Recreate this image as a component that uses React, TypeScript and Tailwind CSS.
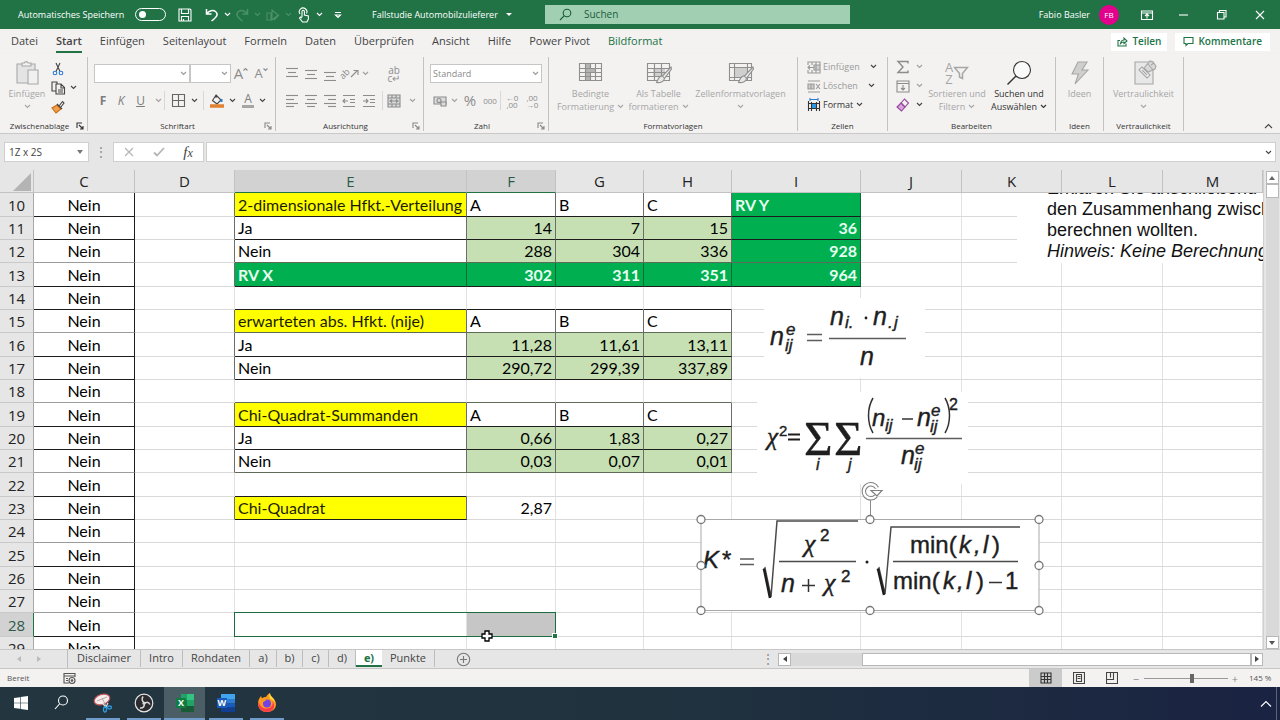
import React from 'react';
import clsx from 'clsx';

type Kind = 'yellow' | 'plain' | 'light' | 'total' | 'open';

interface CellData {
  value: string;
  kind: Kind;
}

const columns = ['C', 'D', 'E', 'F', 'G', 'H', 'I', 'J', 'K', 'L', 'M'];
const rowNumbers = Array.from({ length: 20 }).map((_, index) => index + 10);

const cell = (value: string, kind: Kind): CellData => ({ value, kind });

const tableHead = (title: string) => ({
  E: cell(title, 'yellow'),
  F: cell('A', 'plain'),
  G: cell('B', 'plain'),
  H: cell('C', 'plain'),
});

const tableRow = (title: string, values: string[]) => ({
  E: cell(title, 'plain'),
  F: cell(values[0], 'light'),
  G: cell(values[1], 'light'),
  H: cell(values[2], 'light'),
});

const sheet: Record<number, Record<string, CellData>> = {
  10: { ...tableHead('2-dimensionale Hfkt.-Verteilung'), I: cell('RV Y', 'total') },
  11: { ...tableRow('Ja', ['14', '7', '15']), I: cell('36', 'total') },
  12: { ...tableRow('Nein', ['288', '304', '336']), I: cell('928', 'total') },
  13: { E: cell('RV X', 'total'), F: cell('302', 'total'), G: cell('311', 'total'), H: cell('351', 'total'), I: cell('964', 'total') },
  15: tableHead('erwarteten abs. Hfkt. (nije)'),
  16: tableRow('Ja', ['11,28', '11,61', '13,11']),
  17: tableRow('Nein', ['290,72', '299,39', '337,89']),
  19: tableHead('Chi-Quadrat-Summanden'),
  20: tableRow('Ja', ['0,66', '1,83', '0,27']),
  21: tableRow('Nein', ['0,03', '0,07', '0,01']),
  23: { E: cell('Chi-Quadrat', 'yellow'), F: cell('2,87', 'open') },
};

const kindClasses: Record<Kind, string> = {
  yellow: 'bg-[#ffff00] text-[#1c1c00]',
  plain: 'bg-white',
  light: 'bg-[#c6e0b4]',
  total: 'bg-[#00b050] text-[#e9fff2] font-bold',
  open: '',
};

const isBoxed = (row: number, column: string) => {
  const data = sheet[row]?.[column];
  return data != undefined && data.kind != 'open';
};

function Chevron({ className = 'text-[#444]' }: { className?: string }) {
  return (
    <svg className={clsx('h-[5px] w-[7px] shrink-0', className)} viewBox="0 0 7 5" fill="none" stroke="currentColor" strokeWidth="1.1">
      <path d="M1 1l2.5 2.5L6 1" />
    </svg>
  );
}

function Icon({ size = 16, className, children }: { size?: number; className?: string; children: React.ReactNode }) {
  return (
    <svg width={size} height={size} viewBox={`0 0 ${size} ${size}`} fill="none" stroke="currentColor" strokeWidth="1.1" className={clsx('shrink-0', className)}>
      {children}
    </svg>
  );
}

/* ---------- title bar ---------- */

function TitleBar() {
  return (
    <header className="flex h-[29px] shrink-0 items-center bg-[#217346] text-[10px] text-white">
      <label className="flex w-[171px] shrink-0 items-center gap-[5px] pl-[18px]">
        <span className="w-[112px] text-[9px] whitespace-nowrap">Automatisches Speichern</span>
        <span className="flex h-[13px] w-[31px] items-center rounded-full border border-white pl-[3px]">
          <input type="checkbox" className="h-[7px] w-[7px] appearance-none rounded-full bg-white" />
        </span>
      </label>
      <div className="flex w-[201px] shrink-0 items-center">
        <button aria-label="Speichern" className="flex w-[27px] justify-center">
          <Icon>
            <path d="M2 2h11l1 1v11H2zM4.500 2v4.500h7V2M4.500 14V9.500h7V14M6.500 14v-2" />
          </Icon>
        </button>
        <button aria-label="Rückgängig" className="flex w-[34px] items-center justify-center gap-1 pl-1">
          <Icon>
            <path strokeWidth="1.5" d="M2.500 2v5h5M2.500 7C5 3.500 9 2.500 11.500 4.500c3 2.500 2 5-4 9.500" />
          </Icon>
          <Chevron className="text-white" />
        </button>
        <button aria-label="Wiederholen" className="flex w-[31px] items-center justify-center gap-1 text-[#4a9069]">
          <Icon>
            <path strokeWidth="1.5" d="M13.500 2v5h-5M13.500 7C11 3.500 7 2.500 4.500 4.500c-3 2.500-2 5 4 9.500" />
          </Icon>
          <Chevron className="text-[#4a9069]" />
        </button>
        <button aria-label="Freihand" className="flex w-[30px] items-center justify-center gap-1 text-[#4a9069]">
          <Icon>
            <path d="M2 6v7h4V6zM7 3v10l6-5zM9 13l5-5" />
          </Icon>
          <Chevron className="text-[#4a9069]" />
        </button>
        <button aria-label="Touch-/Mausmodus" className="flex w-[33px] items-center justify-center gap-1">
          <Icon>
            <path d="M6 10V4.500a1.200 1.200 0 0 1 2.400 0V8l4 1v3l-1.500 3H6.500L3.500 11l1-1L6 11M4 7a3.800 3.800 0 1 1 6.500-.5" />
          </Icon>
          <Chevron className="text-white" />
        </button>
        <button aria-label="Symbolleiste anpassen" className="flex w-[16px] justify-end">
          <Icon size={8}>
            <path d="M1 1.500h6M1.500 4l2.500 2.500L6.500 4z" />
          </Icon>
        </button>
      </div>
      <button className="flex w-[173px] shrink-0 items-center gap-2 text-[9px] whitespace-nowrap">
        <span>Fallstudie Automobilzulieferer</span>
        <svg className="h-[4px] w-[6px]" viewBox="0 0 6 4">
          <path d="M0 0h6L3 3z" fill="white" />
        </svg>
      </button>
      <label className="flex h-[19px] w-[305px] shrink-0 items-center bg-[#a0cfb2] pl-[14px] text-[#185c37]">
        <Icon size={13}>
          <circle cx="8" cy="5" r="3.800" />
          <path d="M5.300 7.700L1 12" />
        </Icon>
        <input type="text" placeholder="Suchen" aria-label="Suchen" className="ml-3 w-full bg-transparent text-[10px] outline-none placeholder:text-[#205c3b]" />
      </label>
      <div className="ml-auto flex items-center">
        <span className="text-[9px] whitespace-nowrap">Fabio Basler</span>
        <span className="mr-[21px] ml-[9px] flex size-5 items-center justify-center rounded-full bg-[#e3008c] text-[8px]">FB</span>
        <button aria-label="Menüband-Anzeigeoptionen" className="flex w-[38px] justify-start">
          <Icon size={14}>
            <path d="M1.500 3h11v8.500h-11zM1.500 5h11M7 10.500V6M5 8l2-2 2 2" />
          </Icon>
        </button>
        <button aria-label="Minimieren" className="flex w-[38px] justify-start">
          <Icon size={12}>
            <path d="M1 6h9" />
          </Icon>
        </button>
        <button aria-label="Wiederherstellen" className="flex w-[38px] justify-start">
          <Icon size={12}>
            <path d="M1.500 3.500h6.500v6.500H1.500zM3.500 3.500v-2H10V8H8" />
          </Icon>
        </button>
        <button aria-label="Schließen" className="flex w-[26px] justify-start">
          <Icon size={12}>
            <path d="M2 2l8 8M10 2l-8 8" />
          </Icon>
        </button>
      </div>
    </header>
  );
}

/* ---------- ribbon ---------- */

const ribbonTabs = ['Datei', 'Start', 'Einfügen', 'Seitenlayout', 'Formeln', 'Daten', 'Überprüfen', 'Ansicht', 'Hilfe', 'Power Pivot', 'Bildformat'];

function RibbonTabs() {
  return (
    <nav className="flex h-[25px] shrink-0 items-center bg-[#f3f2f1] pr-[10px] pl-[11px] text-[11px] text-[#444]">
      <div className="flex gap-[18px]">
        {ribbonTabs.map((tab) => (
          <button
            key={tab}
            className={clsx(
              'h-[23px] border-b-2 pt-px whitespace-nowrap',
              tab == 'Start' ? 'border-[#217346] font-semibold' : 'border-transparent',
              tab == 'Bildformat' && 'text-[#217346]',
            )}
          >
            {tab}
          </button>
        ))}
      </div>
      <div className="ml-auto flex gap-2 text-[10px] font-semibold text-[#217346]">
        <button className="flex h-[18px] items-center gap-1 bg-white px-[6px]">
          <Icon size={11}>
            <path d="M3 4.500H1V10h8V7.500M3.500 7.500C4 5 5.500 4 7 4V2l3 3-3 2.500V6C5.500 6 4.500 6.500 3.500 7.500z" />
          </Icon>
          Teilen
        </button>
        <button className="flex h-[18px] items-center gap-1 bg-white px-2">
          <Icon size={11}>
            <path d="M1 1.500h9v6H5L3 9.500v-2H1z" />
          </Icon>
          Kommentare
        </button>
      </div>
    </nav>
  );
}

function Group({ label, className, launcher, children }: { label: string; className: string; launcher?: string; children: React.ReactNode }) {
  return (
    <section aria-label={label} className={clsx('flex h-[74px] shrink-0 flex-col border-r border-[#c4c2c0]', className)}>
      <div className="flex-1">{children}</div>
      <div className="flex h-[11px] items-center px-[3px] text-[8px] text-[#333]">
        <span className="flex-1 text-center leading-[10px] whitespace-nowrap">{label}</span>
        {launcher ? (
          <button aria-label={`${label} Optionen`} className={launcher}>
            <Icon size={8}>
              <path d="M1 6V1h5M3 3l4 4M7 4v3H4" />
            </Icon>
          </button>
        ) : null}
      </div>
    </section>
  );
}

function BigButton({ lines, className, chevron, icon }: { lines: string[]; className: string; chevron?: boolean; icon: React.ReactNode }) {
  return (
    <button className={clsx('flex flex-col items-center pt-px text-[9px] leading-[13px]', className)}>
      <span className="flex h-[29px] items-center">{icon}</span>
      {lines.map((line, index) => (
        <span key={line + index} className="flex h-[13px] items-center gap-[3px] whitespace-nowrap">
          {line}
          {chevron && index == lines.length - 1 ? <Chevron className="text-current" /> : null}
        </span>
      ))}
    </button>
  );
}

function ConditionalIcon() {
  return (
    <Icon size={27} className="text-[#8f8f8f]">
      <path d="M8 4h5v18H8zM13 9h5v5h-5z" fill="#b4b4b4" stroke="none" />
      <path d="M2.500 4.500h22v17h-22zM2.500 9.500h22M2.500 13.500h22M2.500 17.500h22M8.500 4.500v17M13.500 4.500v5M13.500 13.500v8M18.500 4.500v17" />
    </Icon>
  );
}

function TableBrushIcon({ grid }: { grid: string }) {
  return (
    <Icon size={27} className="text-[#8f8f8f]">
      <path d="M8 9h12v9H8z" fill="#cfcfcf" stroke="none" />
      <path d={grid} />
      <path d="M26 8l-8.500 9c-2-.5-4 1.500-6 6.500 3.500.5 7.500-.5 8-4L26.500 10z" fill="#e8e8e8" />
      <path d="M17.500 17l2 2.500" />
    </Icon>
  );
}

function AlignIcon({ widths }: { widths: number[][] }) {
  return (
    <Icon size={14} className="text-[#8c8c8c]">
      {widths.map(([start, end, y]) => (
        <path key={y} d={`M${start} ${y}.500H${end}`} />
      ))}
    </Icon>
  );
}

const alignIcons = {
  top: [[1, 13, 1], [3, 11, 5], [1, 13, 9]],
  middle: [[1, 13, 3], [3, 11, 7], [1, 13, 11]],
  bottom: [[1, 13, 5], [3, 11, 9], [1, 13, 13]],
  left: [[1, 13, 1], [1, 9, 5], [1, 13, 9], [1, 9, 12]],
  center: [[1, 13, 1], [3, 11, 5], [1, 13, 9], [3, 11, 12]],
  right: [[1, 13, 1], [5, 13, 5], [1, 13, 9], [5, 13, 12]],
};

function IndentIcon({ out }: { out?: boolean }) {
  return (
    <Icon size={14} className="text-[#8c8c8c]">
      <path d="M1 1.500h12M8 5.500h5M8 8.500h5M1 12.500h12" />
      <path d={out ? 'M6 7H1M3 5L1 7l2 2' : 'M1 7h5M4 5l2 2-2 2'} />
    </Icon>
  );
}

function Combo({ label, value, className }: { label: string; value: string; className: string }) {
  return (
    <div className={clsx('relative h-[19px] border border-[#c8c6c4] bg-white', className)}>
      <select aria-label={label} className="block h-[17px] w-full appearance-none bg-transparent pl-[2px] text-[9px] leading-[17px] text-[#8a8a8a]">
        <option>{value}</option>
      </select>
      <span className="pointer-events-none absolute inset-y-0 right-[2px] flex items-center">
        <Chevron className="text-[#9a9a9a]" />
      </span>
    </div>
  );
}

function ToolButton({ label, className, children }: { label: string; className: string; children: React.ReactNode }) {
  return (
    <button aria-label={label} className={clsx('flex h-[19px] shrink-0 items-center justify-center', className)}>
      {children}
    </button>
  );
}

const Divider = () => <span className="h-[19px] w-px shrink-0 bg-[#dad8d6]" />;

function Ribbon() {
  return (
    <div className="flex h-20 shrink-0 border-b border-[#c9c9c9] bg-[#f3f2f1] pt-[3px] shadow-[0_1px_2px_#0002]">
      <Group label="Zwischenablage" className="w-[88px]" launcher="text-[#333]">
        <div className="flex">
          <BigButton
            lines={['Einfügen', '']}
            chevron
            className="w-[51px] pl-[3px] text-[#a6a6a6]"
            icon={
              <Icon size={27} className="text-[#a8a8a8]">
                <path d="M3 5h18v19H3z" fill="#e4e4e4" />
                <path d="M8 7V4h2.500a1.800 1.800 0 0 1 3.500 0H17v3z" fill="#f3f2f1" />
                <path d="M14 11h10v14H14z" fill="#f0f0f0" />
              </Icon>
            }
          />
          <div className="flex flex-col items-start pt-[2px]">
            <ToolButton label="Ausschneiden" className="w-[14px]">
              <Icon size={14}>
                <path d="M5 1l4 8.500M9 1L5 9.500" stroke="#444" />
                <circle cx="4" cy="11" r="1.800" stroke="#2b7cd3" />
                <circle cx="10" cy="11" r="1.800" stroke="#2b7cd3" />
              </Icon>
            </ToolButton>
            <ToolButton label="Kopieren" className="gap-1">
              <Icon size={15} className="text-[#444]">
                <path d="M5 11H1V2h5v2M5 4h5l3.500 3.500V14H5zM10 4v4h3.500M7 10h5M7 12h5" />
              </Icon>
              <Chevron />
            </ToolButton>
            <ToolButton label="Format übertragen" className="w-[14px]">
              <Icon size={14}>
                <path d="M6 5L1 8l4 5 5-4z" fill="#f0a04b" stroke="#c96a12" />
                <path d="M6 4l5 5M8 6l3.500-4.500L13 3 9.500 7.500" stroke="#444" />
              </Icon>
            </ToolButton>
          </div>
        </div>
      </Group>

      <Group label="Schriftart" className="w-[188px]" launcher="text-[#888]">
        <div className="mt-[7px] flex h-[19px] items-center pl-[6px]">
          <Combo label="Schriftart" value=" " className="w-[96px]" />
          <Combo label="Schriftgrad" value=" " className="w-[41px]" />
          <ToolButton label="Schriftgrad vergrößern" className="w-[20px] text-[15px] text-[#8c8c8c]">
            A
            <Icon size={5} className="mb-2">
              <path d="M0.500 3.500l2-2 2 2" />
            </Icon>
          </ToolButton>
          <ToolButton label="Schriftgrad verkleinern" className="w-[20px] text-[13px] text-[#8c8c8c]">
            A
            <Icon size={5} className="mb-2">
              <path d="M0.500 1.500l2 2 2-2" />
            </Icon>
          </ToolButton>
        </div>
        <div className="flex items-center pt-2 pl-[6px] text-[12px] text-[#7d7d7d]">
          <ToolButton label="Fett" className="w-[18px] font-bold">F</ToolButton>
          <ToolButton label="Kursiv" className="w-[18px] italic">K</ToolButton>
          <ToolButton label="Unterstrichen" className="w-[34px] gap-[10px] pl-1">
            <span className="underline">U</span>
            <Chevron className="text-[#a0a0a0]" />
          </ToolButton>
          <Divider />
          <ToolButton label="Rahmen" className="w-[38px] gap-[5px]">
            <Icon size={15} className="text-[#666]">
              <path d="M1.500 1.500h12v12h-12zM7.500 1.500v12M1.500 7.500h12" />
            </Icon>
            <Chevron />
          </ToolButton>
          <Divider />
          <ToolButton label="Füllfarbe" className="w-[34px] gap-[5px] pl-1">
            <Icon size={14}>
              <path d="M6 1l5 5-4 4-4.500-3.500zM6 1v3" stroke="#444" />
              <path d="M11.500 5v3" stroke="#2b7cd3" strokeWidth="2" />
              <path d="M0 12h14" stroke="#e08232" strokeWidth="3.500" />
            </Icon>
            <Chevron />
          </ToolButton>
          <ToolButton label="Schriftfarbe" className="w-[32px] gap-[5px]">
            <span className="h-[15px] border-b-[3px] border-[#a6a6a6] px-[2px] text-[12px] leading-[12px]">A</span>
            <Chevron />
          </ToolButton>
        </div>
      </Group>

      <Group label="Ausrichtung" className="w-[148px]" launcher="text-[#888]">
        <div className="flex items-center pt-[7px] pl-[6px]">
          <ToolButton label="Oben ausrichten" className="w-[19px]"><AlignIcon widths={alignIcons.top} /></ToolButton>
          <ToolButton label="Zentriert ausrichten" className="w-[19px]"><AlignIcon widths={alignIcons.middle} /></ToolButton>
          <ToolButton label="Unten ausrichten" className="w-[19px]"><AlignIcon widths={alignIcons.bottom} /></ToolButton>
          <ToolButton label="Ausrichtung" className="w-[30px] text-[#8c8c8c]">
            <span className="-rotate-45 text-[9px] leading-none">ab</span>
            <Icon size={9}>
              <path d="M1 8l6-6M3.500 1.500H8V6" />
            </Icon>
            <Chevron className="ml-[3px] text-[#a0a0a0]" />
          </ToolButton>
          <ToolButton label="Textumbruch" className="ml-[14px] w-[22px] flex-col text-[10px] leading-[8px] text-[#8c8c8c]">
            <span>ab</span>
            <span>c↵</span>
          </ToolButton>
        </div>
        <div className="flex items-center pt-2 pl-[6px]">
          <ToolButton label="Linksbündig" className="w-[19px]"><AlignIcon widths={alignIcons.left} /></ToolButton>
          <ToolButton label="Zentriert" className="w-[19px]"><AlignIcon widths={alignIcons.center} /></ToolButton>
          <ToolButton label="Rechtsbündig" className="w-[19px]"><AlignIcon widths={alignIcons.right} /></ToolButton>
          <ToolButton label="Einzug verkleinern" className="w-[20px]"><IndentIcon out /></ToolButton>
          <ToolButton label="Einzug vergrößern" className="w-[19px]"><IndentIcon /></ToolButton>
          <span className="w-1" />
          <Divider />
          <ToolButton label="Verbinden und zentrieren" className="w-[36px] gap-2">
            <Icon size={14} className="text-[#8c8c8c]">
              <path d="M1 1h12v12H1z" fill="#dcdcdc" />
              <path d="M1 4h12M1 10h12M5 1v3M9 1v3M5 10v3M9 10v3M3 7h8M5 5.500L3 7l2 1.500M9 5.500L11 7 9 8.500" />
            </Icon>
            <Chevron className="text-[#a0a0a0]" />
          </ToolButton>
        </div>
      </Group>

      <Group label="Zahl" className="w-[125px]" launcher="text-[#888]">
        <div className="pt-[7px] pl-[6px]">
          <Combo label="Zahlenformat" value="Standard" className="w-[112px]" />
        </div>
        <div className="flex items-center pt-2 pl-[6px] text-[#8c8c8c]">
          <ToolButton label="Buchhaltungszahlenformat" className="w-[30px] gap-1">
            <Icon size={14}>
              <path d="M1 3h12v7H1z" fill="#dcdcdc" />
              <circle cx="6" cy="6.500" r="2" />
              <path d="M8 8h5v4H8z" fill="#dcdcdc" />
            </Icon>
            <Chevron className="text-[#a0a0a0]" />
          </ToolButton>
          <ToolButton label="Prozentformat" className="w-[20px] text-[15px]">%</ToolButton>
          <ToolButton label="Tausendertrennzeichen" className="w-[20px] text-[8px]">000</ToolButton>
          <Divider />
          <ToolButton label="Dezimalstelle hinzufügen" className="w-[22px] flex-col text-[8px] leading-[7px]">
            <span>←0</span>
            <span>,00</span>
          </ToolButton>
          <ToolButton label="Dezimalstelle entfernen" className="w-[18px] flex-col text-[8px] leading-[7px]">
            <span>,00</span>
            <span>→0</span>
          </ToolButton>
        </div>
      </Group>

      <Group label="Formatvorlagen" className="w-[249px]">
        <div className="flex pl-[7px] text-[#a6a6a6]">
          <BigButton lines={['Bedingte', 'Formatierung']} chevron className="w-[69px]" icon={<ConditionalIcon />} />
          <BigButton
            lines={['Als Tabelle', 'formatieren']}
            chevron
            className="w-[67px]"
            icon={<TableBrushIcon grid="M2.500 4.500h22v17h-22zM2.500 9.500h22M2.500 13.500h22M2.500 17.500h22M9.500 4.500v17M16.500 4.500v17" />}
          />
          <BigButton
            lines={['Zellenformatvorlagen', '']}
            chevron
            className="w-[97px]"
            icon={<TableBrushIcon grid="M2.500 4.500h22v17h-22zM2.500 8.500h22M2.500 18.500h22M7.500 4.500v17M20.500 4.500v17" />}
          />
        </div>
      </Group>

      <Group label="Zellen" className="w-[90px]">
        <div className="flex flex-col items-start pl-[9px] text-[9px] text-[#9a9a9a]">
          <button className="flex h-[19px] items-center gap-[2px]">
            <Icon size={14}>
              <path d="M7 5h6v5H7z" fill="#cfcfcf" />
              <path d="M1 5V2h12v3M1 10v3h12v-3M5 2v3M9 2v11M5 10v3M7 7.500H1M3 5.500l-2 2 2 2" />
            </Icon>
            <span className="mr-[8px]">Einfügen</span>
            <Chevron />
          </button>
          <button className="flex h-[19px] items-center gap-[2px]">
            <Icon size={14}>
              <path d="M1 5h6v5H1z" fill="#cfcfcf" />
              <path d="M1 2h12M1 13h12M4 5v5M9 5l4 5M13 5l-4 5" />
            </Icon>
            <span className="mr-[8px]">Löschen</span>
            <Chevron />
          </button>
          <button className="flex h-[19px] items-center gap-[2px] text-[#333]">
            <Icon size={14}>
              <path d="M4 5h6v5H4z" fill="#2b9be8" stroke="none" />
              <path d="M1.500 3v10M12.500 3v10M1.500 5.500h11M1.500 10.500h11M4.500 4v9M9.500 4v9" />
              <path d="M3 1.500h8M3 0v3M11 0v3" stroke="#2b7cd3" />
            </Icon>
            <span className="mr-px">Format</span>
            <Chevron />
          </button>
        </div>
      </Group>

      <Group label="Bearbeiten" className="w-[168px]">
        <div className="flex">
          <div className="flex w-[36px] flex-col pl-[7px] text-[#8c8c8c]">
            <ToolButton label="AutoSumme" className="gap-[6px]">
              <Icon size={14}>
                <path strokeWidth="1.400" d="M12 3.500V1.500H2L7 7l-5 5.500h10v-2" />
              </Icon>
              <Chevron className="text-[#a0a0a0]" />
            </ToolButton>
            <ToolButton label="Ausfüllen" className="gap-[6px]">
              <Icon size={14}>
                <path d="M1 2h12v11H1zM1 4.500h12M7 6v5M5 9l2 2 2-2" />
              </Icon>
              <Chevron className="text-[#a0a0a0]" />
            </ToolButton>
            <ToolButton label="Löschen" className="gap-[6px]">
              <Icon size={14}>
                <path d="M1 9l4-4 4 4-3.500 4z" fill="#d9a5dc" stroke="#94479b" />
                <path d="M5 5l3.500-4 4 4L9 9z" stroke="#94479b" />
              </Icon>
              <Chevron />
            </ToolButton>
          </div>
          <BigButton
            lines={['Sortieren und', 'Filtern']}
            chevron
            className="w-[66px] text-[#a6a6a6]"
            icon={
              <span className="flex items-center">
                <span className="flex flex-col text-[13px] leading-[12px]">
                  <span>A</span>
                  <span>Z</span>
                </span>
                <Icon size={16}>
                  <path strokeWidth="1.500" d="M1.500 2.500h13l-5 6v5l-3-1.500V8.500z" />
                </Icon>
              </span>
            }
          />
          <BigButton
            lines={['Suchen und', 'Auswählen']}
            chevron
            className="w-[58px] text-[#333]"
            icon={
              <Icon size={26}>
                <circle cx="16" cy="10" r="8.500" fill="#fafafa" />
                <path d="M10 16l-8.500 8.500" strokeWidth="1.500" />
              </Icon>
            }
          />
        </div>
      </Group>

      <Group label="Ideen" className="w-[48px]">
        <BigButton
          lines={['Ideen']}
          className="w-full text-[#a6a6a6]"
          icon={
            <Icon size={26}>
              <path d="M11 2h9l-5 8h6L8 24l3.500-10H5z" fill="#cfcfcf" />
            </Icon>
          }
        />
      </Group>

      <Group label="Vertraulichkeit" className="w-[80px]">
        <BigButton
          lines={['Vertraulichkeit', '']}
          chevron
          className="w-full text-[#a6a6a6]"
          icon={
            <Icon size={26}>
              <path d="M4 2h18v22H4z" fill="#e8e8e8" />
              <path d="M8 10l3-3 8 8-3 3zM11 10l5 5" fill="#f6f6f6" />
              <path d="M13 8l6-7 3 1 3 4-1 3-7 3zM17 4l5 6M20 5l3-2" fill="#d8d8d8" />
            </Icon>
          }
        />
      </Group>

      <button aria-label="Menüband reduzieren" className="mt-auto mr-[7px] mb-[2px] ml-auto">
        <Icon size={9} className="text-[#444]">
          <path d="M1 6l3.500-3.500L8 6" />
        </Icon>
      </button>
    </div>
  );
}

/* ---------- formula bar ---------- */

function FormulaBar() {
  return (
    <div className="flex h-9 shrink-0 items-center bg-[#e6e6e6] pr-1 pl-1 text-[#444]">
      <div className="flex h-5 w-[85px] shrink-0 items-center border border-[#cfcfcf] bg-white">
        <input type="text" aria-label="Namenfeld" defaultValue="1Z x 2S" className="w-[72px] pl-1 text-[10px] outline-none" />
        <svg className="h-[4px] w-[6px]" viewBox="0 0 6 4">
          <path d="M0 0h6L3 4z" fill="#777" />
        </svg>
      </div>
      <span className="w-[24px] text-center text-[12px] leading-none text-[#888]">⋮</span>
      <div className="flex h-5 w-[91px] shrink-0 items-center border border-[#cfcfcf] bg-white">
        <button aria-label="Abbrechen" className="flex w-[29px] justify-center">
          <Icon size={10} className="text-[#b5b5b5]">
            <path d="M1 1l8 8M9 1L1 9" />
          </Icon>
        </button>
        <button aria-label="Eingeben" className="flex w-[31px] justify-center">
          <Icon size={12} className="text-[#b5b5b5]">
            <path strokeWidth="1.800" d="M1 6.500L4 9.500l7-7.500" />
          </Icon>
        </button>
        <button aria-label="Funktion einfügen" className="w-[28px] font-['Liberation_Serif',serif] text-[15px] leading-none italic">
          f<span className="text-[12px]">x</span>
        </button>
      </div>
      <div className="ml-[2px] flex h-5 flex-1 items-center border border-[#cfcfcf] bg-white pr-[3px]">
        <input type="text" aria-label="Bearbeitungsleiste" className="h-full flex-1 outline-none" />
        <Chevron />
      </div>
    </div>
  );
}

/* ---------- objects lying on the sheet ---------- */

const sansItalic = "font-['Liberation_Sans',Arial,sans-serif] italic";
const sans = "font-['Liberation_Sans',Arial,sans-serif]";
const serifItalic = "font-['Liberation_Serif',serif] italic";

function T({ x, y, size = 25, className = sansItalic, children }: { x: number; y: number; size?: number; className?: string; children: string }) {
  return (
    <text x={x} y={y} fontSize={size} className={className} fill="#1e1e1e" stroke="#1e1e1e" strokeWidth="0.4">
      {children}
    </text>
  );
}

// n with upper index e and lower index ij
function ExpectedN({ x, y, gap = 14 }: { x: number; y: number; gap?: number }) {
  return (
    <>
      <T x={x} y={y}>n</T>
      <T x={x + gap} y={y - 10} size={17}>e</T>
      <T x={x + gap - 1} y={y + 6} size={17}>ij</T>
    </>
  );
}

function ExpectedFormula() {
  return (
    <svg className="absolute top-[128px] left-[764px] bg-white" width="161" height="80" viewBox="764 298 161 80">
      <ExpectedN x={770} y={345} gap={16} />
      <path d="M807 334.500h15M807 340.500h15M829 338.500h77" stroke="#5c5c5c" strokeWidth="1.600" />
      <T x={830} y={325}>n</T>
      <T x={845} y={328} size={17}>i.</T>
      <circle cx="866" cy="318" r="1.400" fill="#1e1e1e" />
      <T x={873} y={325}>n</T>
      <T x={888} y={328} size={17}>.</T>
      <T x={894} y={328} size={17}>j</T>
      <T x={860} y={365}>n</T>
    </svg>
  );
}

function ChiSquareFormula() {
  return (
    <svg className="absolute top-[222px] left-[757px] bg-white" width="211" height="92" viewBox="757 392 211 92">
      <T x={767} y={445} size={25} className={serifItalic}>χ</T>
      <T x={779} y={436} size={15} className={sans}>2</T>
      <path d="M788 434.500h12M788 439.500h12" stroke="#1e1e1e" strokeWidth="1.800" />
      <T x={804} y={455} size={49} className="font-['Liberation_Serif',serif]">Σ</T>
      <T x={834} y={455} size={49} className="font-['Liberation_Serif',serif]">Σ</T>
      <T x={816} y={470} size={16}>i</T>
      <T x={848} y={470} size={16}>j</T>
      <path d="M866 438.500h96" stroke="#5c5c5c" strokeWidth="1.600" />
      <path d="M873 398c-6 10-6 25 0 35M945 398c6 10 6 25 0 35" fill="none" stroke="#333" strokeWidth="1.500" />
      <T x={872} y={426} size={24}>n</T>
      <T x={885} y={431} size={17}>ij</T>
      <path d="M902 419h11" stroke="#333" strokeWidth="1.500" />
      <ExpectedN x={917} y={426} />
      <T x={949} y={410} size={16} className={sans}>2</T>
      <ExpectedN x={901} y={464} />
    </svg>
  );
}

const handles = [
  [701, 519],
  [870, 519],
  [1039, 519],
  [701, 565],
  [1039, 565],
  [701, 610],
  [870, 610],
  [1039, 610],
];

function ContingencyFormula() {
  return (
    <svg className="absolute top-[310px] left-[695px]" width="350" height="136" viewBox="695 480 350 136">
      <path d="M701 519.500h338v91H701z" fill="white" stroke="#a9a9a9" />
      <path d="M870.500 498v20" stroke="#8a8a8a" />
      <T x={703} y={568} size={24}>K</T>
      <T x={721} y={568} size={24}>*</T>
      <path d="M740 559h14M740 564.500h14" stroke="#5c5c5c" strokeWidth="1.600" />
      <path d="M763 570l2-2 6 29 6-76h81M877 570l2-2 6 26 6-67h129M779 561.500h77M893 561.500h125" fill="none" stroke="#4a4a4a" strokeWidth="1.500" />
      <path d="M764 569l6 29M878 569l6 26" stroke="#1e1e1e" strokeWidth="2.500" />
      <T x={804} y={552} size={26} className={serifItalic}>χ</T>
      <T x={820} y={541} size={17} className={sans}>2</T>
      <T x={781} y={592}>n</T>
      <path d="M802 585.500h13M808.500 579v13M989 582.500h13" stroke="#333" strokeWidth="1.500" />
      <T x={824} y={591} size={26} className={serifItalic}>χ</T>
      <T x={841} y={582} size={17} className={sans}>2</T>
      <circle cx="867" cy="562" r="1.500" fill="#1e1e1e" />
      <T x={910} y={553} size={24} className={sans}>min(</T>
      <T x={959} y={553} size={24}>k</T>
      <T x={974} y={553} size={24}>,</T>
      <T x={983} y={553} size={24}>l</T>
      <T x={992} y={553} size={24} className={sans}>)</T>
      <T x={893} y={589} size={24} className={sans}>min(</T>
      <T x={943} y={589} size={24}>k</T>
      <T x={957} y={589} size={24}>,</T>
      <T x={966} y={589} size={24}>l</T>
      <T x={976} y={589} size={24} className={sans}>)</T>
      <T x={1005} y={589} size={24} className={sans}>1</T>
      {handles.map(([x, y]) => (
        <circle key={`${x}-${y}`} cx={x} cy={y + 0.5} r="4" fill="white" stroke="#777" strokeWidth="1.300" />
      ))}
      <path d="M877 488a7 7 0 1 0-1 8" fill="none" stroke="#808080" strokeWidth="4.500" />
      <path d="M877 488a7 7 0 1 0-1 8" fill="none" stroke="white" strokeWidth="2.400" />
      <path d="M871 490.500h11l-5 5.500z" fill="white" stroke="#808080" strokeWidth="1.200" />
    </svg>
  );
}

function TaskNote() {
  return (
    <div className="absolute top-[23px] right-0 left-[1017px] h-[70px] overflow-hidden bg-white pl-[30px] font-['Liberation_Sans',Arial,sans-serif] text-[18px] leading-[21px] whitespace-nowrap text-[#111]">
      <div className="-mt-[15px]">
        <p>Erklären Sie anschließend i</p>
        <p>den Zusammenhang zwischen</p>
        <p>berechnen wollten.</p>
        <p className="italic">Hinweis: Keine Berechnung</p>
      </div>
    </div>
  );
}

/* ---------- sheet ---------- */

function SheetCell({ row, column }: { row: number; column: string }) {
  const index = row - 10;
  const data = sheet[row]?.[column];
  const next = columns[columns.indexOf(column) + 1];
  const boxed = isBoxed(row, column);
  const softLine = index % 3 == 2;

  let bottom = 'border-b-[#d9d9d9]';
  if (column == 'C') bottom = softLine ? 'border-b-[#9c9c9c]' : 'border-b-[#1c1c1c]';
  else if (boxed || isBoxed(row + 1, column)) bottom = softLine ? 'border-b-[#5e6b58]' : 'border-b-[#1c1c1c]';

  let right = 'border-r-[#e2e2e2]';
  if (column == 'C') right = 'border-r-[#1c1c1c]';
  else if (data?.kind == 'total') right = 'border-r-[#0d6a38]';
  else if (boxed || (next && isBoxed(row, next))) right = 'border-r-[#6d6d6d]';

  const value = column == 'C' ? 'Nein' : data?.value;
  const isNumber = value != undefined && /^\d[\d,]*$/.test(value);

  return (
    <td
      className={clsx(
        'overflow-hidden border-r border-b px-[3px] py-0 whitespace-nowrap',
        bottom,
        right,
        data && kindClasses[data.kind],
        column == 'C' && 'text-center',
        isNumber && 'text-right',
        row == 28 && column == 'F' && 'bg-[#c6c6c6]',
      )}
    >
      {value}
    </td>
  );
}

function Sheet() {
  return (
    <main className="flex min-h-0 flex-1 bg-[#e6e6e6]">
      <div className="relative flex-1 overflow-hidden border-r border-[#d0d0d0] bg-white">
        <table className="w-full table-fixed border-separate border-spacing-0 font-['Lato','Open_Sans',sans-serif] text-[16px] leading-[22px] text-black [font-variant-ligatures:none]">
          <colgroup>
            <col className="w-[34px]" />
            <col className="w-[101px]" />
            <col className="w-[100px]" />
            <col className="w-[232px]" />
            <col className="w-[89px]" />
            <col className="w-[88px]" />
            <col className="w-[88px]" />
            <col className="w-[129px]" />
            <col className="w-[101px]" />
            <col className="w-[100px]" />
            <col className="w-[101px]" />
            <col />
          </colgroup>
          <thead>
            <tr className="h-[23px] bg-[#e6e6e6] font-['Open_Sans',sans-serif] text-[15px]">
              <th aria-label="Alles markieren" className="border-r border-b border-[#c2c2c2] p-0">
                <svg className="mt-[2px] mr-[2px] ml-auto h-[18px] w-[18px]" viewBox="0 0 18 18">
                  <path d="M18 0v18H0z" fill="#b4b4b4" />
                </svg>
              </th>
              {columns.map((column) => (
                <th
                  key={column}
                  scope="col"
                  className={clsx(
                    'border-r border-b border-r-[#c2c2c2] p-0 font-normal',
                    column == 'E' || column == 'F' ? 'border-b-[#217346] bg-[#d2d2d2] text-[#2b5a48]' : 'border-b-[#c2c2c2] text-[#222]',
                  )}
                >
                  {column}
                </th>
              ))}
            </tr>
          </thead>
          <tbody>
            {rowNumbers.map((row, index) => (
              <tr key={row} className={index % 3 == 0 ? 'h-[24px]' : 'h-[23px]'}>
                <th
                  scope="row"
                  className={clsx(
                    "border-r border-b border-b-[#c9c9c9] p-0 font-['Open_Sans',sans-serif] text-[15px] font-normal",
                    row == 28 ? 'border-r-[#217346] bg-[#d2d2d2] text-[#2b5a48]' : 'border-r-[#a8a8a8] bg-[#e6e6e6] text-[#222]',
                  )}
                >
                  {row}
                </th>
                {columns.map((column) => (
                  <SheetCell key={column} row={row} column={column} />
                ))}
              </tr>
            ))}
          </tbody>
        </table>

        <TaskNote />
        <ExpectedFormula />
        <ChiSquareFormula />
        <ContingencyFormula />

        <div className="absolute top-[442px] left-[234px] h-[25px] w-[322px] border border-[#1e6b42]" />
        <div className="absolute top-[464px] left-[553px] size-1 bg-[#217346] outline outline-white" />
        <svg className="absolute top-[460px] left-[481px]" width="12" height="12" viewBox="0 0 12 12">
          <path d="M4 1h4v3h3v4H8v3H4V8H1V4h3z" fill="white" stroke="black" strokeWidth="1.300" />
        </svg>
      </div>

      <div className="flex w-4 flex-col items-center pt-px">
        <button aria-label="Nach oben" className="flex h-[13px] w-[13px] items-center justify-center border border-[#b8b8b8] bg-white">
          <svg width="6" height="4" viewBox="0 0 6 4">
            <path d="M0 4h6L3 0z" fill="#666" />
          </svg>
        </button>
        <div className="flex w-[13px] flex-1 flex-col bg-[#d9d9d9]">
          <div className="h-[14px] border border-[#b8b8b8] bg-white" />
        </div>
        <button aria-label="Nach unten" className="flex h-[13px] w-[13px] items-center justify-center border border-[#b8b8b8] bg-white">
          <svg width="6" height="4" viewBox="0 0 6 4">
            <path d="M0 0h6L3 4z" fill="#555" />
          </svg>
        </button>
      </div>
    </main>
  );
}

const sheetTabs = [
  { name: 'Disclaimer', width: 'w-[73px]' },
  { name: 'Intro', width: 'w-[42px]' },
  { name: 'Rohdaten', width: 'w-[67px]' },
  { name: 'a)', width: 'w-[27px]' },
  { name: 'b)', width: 'w-[26px]' },
  { name: 'c)', width: 'w-[26px]' },
  { name: 'd)', width: 'w-[27px]' },
  { name: 'e)', width: 'w-[26px]' },
  { name: 'Punkte', width: 'w-[53px]' },
];

function SheetTabs() {
  return (
    <div className="flex h-5 shrink-0 items-start border-t border-b border-[#c6c6c6] bg-[#e6e6e6] text-[11px] text-[#444]">
      <div className="flex h-[18px] w-[68px] shrink-0 items-center border-r border-[#bdbdbd] pl-[17px]">
        <svg width="24" height="6" viewBox="0 0 24 6" fill="#bcbcbc">
          <path d="M4 0v6L0 3zM20 0v6l4-3z" />
        </svg>
      </div>
      {sheetTabs.map(({ name, width }) => (
        <button
          key={name}
          className={clsx(
            'h-[17px] shrink-0 pb-[2px] text-center leading-[15px]',
            width,
            name == 'e)' ? 'border-b-2 border-[#217346] bg-white font-bold text-[#217346]' : 'border-r border-[#bdbdbd]',
          )}
        >
          {name}
        </button>
      ))}
      <button aria-label="Neues Blatt" className="mt-[2px] ml-[21px]">
        <Icon size={15} className="text-[#777]">
          <circle cx="7.500" cy="7.500" r="6.200" />
          <path d="M7.500 4v7M4 7.500h7" />
        </Icon>
      </button>
      <div className="mt-[2px] mr-[17px] ml-auto flex h-[14px] w-[502px] items-center">
        <span className="w-[14px] text-center text-[12px] leading-none text-[#888]">⋮</span>
        <button aria-label="Nach links" className="ml-[3px] flex h-[13px] w-[13px] items-center justify-center border border-[#b8b8b8] bg-white">
          <svg width="4" height="6" viewBox="0 0 4 6">
            <path d="M4 0v6L0 3z" fill="#444" />
          </svg>
        </button>
        <div className="flex h-[13px] flex-1 bg-[#d9d9d9] pl-[71px]">
          <div className="flex-1 border border-[#b8b8b8] bg-white" />
        </div>
        <button aria-label="Nach rechts" className="flex h-[13px] w-[12px] items-center justify-center border border-[#b8b8b8] bg-white">
          <svg width="4" height="6" viewBox="0 0 4 6">
            <path d="M0 0v6l4-3z" fill="#444" />
          </svg>
        </button>
      </div>
    </div>
  );
}

function StatusBar() {
  return (
    <div className="flex h-[18px] shrink-0 items-center bg-[#f3f2f1] pl-[7px] text-[8px] text-[#555]">
      <span className="w-[56px]">Bereit</span>
      <button aria-label="Makro aufzeichnen">
        <Icon size={13} className="text-[#555]">
          <path d="M6 11H1V1.500h11V5M1 4h11M3 6.500h2M3 8.500h2" />
          <circle cx="9" cy="8.500" r="3" />
          <circle cx="9" cy="8.500" r=".8" fill="currentColor" />
        </Icon>
      </button>
      <div className="ml-auto flex h-full items-center">
        <button aria-label="Normal" className="flex h-full w-[33px] items-center justify-center bg-[#cbcbcb]">
          <Icon size={12} className="text-[#333]">
            <path d="M1 1h10v10H1zM1 4.500h10M1 7.500h10M4.500 1v10M7.500 1v10" />
          </Icon>
        </button>
        <button aria-label="Seitenlayout" className="flex w-[33px] justify-center">
          <Icon size={12} className="text-[#444]">
            <path d="M.5.500h11v11H.5zM3.500 2.500h5v7h-5zM4.500 4.500h3M4.500 6.500h3" />
          </Icon>
        </button>
        <button aria-label="Umbruchvorschau" className="flex w-[33px] justify-center">
          <Icon size={12} className="text-[#444]">
            <path d="M.5.500h11v11H.5zM.5 7.500h7v-7M4.500 .5v5" />
          </Icon>
        </button>
        <button aria-label="Verkleinern" className="w-[16px] text-center text-[11px] leading-none text-[#888]">−</button>
        <input
          type="range"
          aria-label="Zoom"
          defaultValue={58}
          className="h-3 w-[84px] appearance-none bg-[linear-gradient(#999,#999)] bg-[length:100%_1px] bg-center bg-no-repeat [&::-webkit-slider-thumb]:h-[9px] [&::-webkit-slider-thumb]:w-1 [&::-webkit-slider-thumb]:appearance-none [&::-webkit-slider-thumb]:bg-[#666]"
        />
        <button aria-label="Vergrößern" className="w-[14px] text-center text-[11px] leading-none text-[#888]">+</button>
        <span className="w-[38px] pl-[7px] whitespace-nowrap">145 %</span>
      </div>
    </div>
  );
}

/* ---------- taskbar ---------- */

function TaskbarButton({ label, running, active, children }: { label: string; running?: boolean; active?: boolean; children: React.ReactNode }) {
  return (
    <button aria-label={label} className={clsx('flex h-full w-[41px] flex-col items-center', active && 'bg-[#4b5d65]')}>
      <span className="flex flex-1 items-center">{children}</span>
      <span className={clsx('h-[2px]', active ? 'w-full' : 'w-[34px]', running && 'bg-[#6f9cca]')} />
    </button>
  );
}

function Taskbar() {
  return (
    <footer className="flex h-[33px] shrink-0 items-center bg-linear-to-r from-[#233640] via-[#20323e] to-[#1a2342] text-white">
      <TaskbarButton label="Start">
        <svg width="14" height="14" viewBox="0 0 14 14" fill="white">
          <path d="M0 2l6-.8v5.500H0zM6.600 1.100L14 0v6.700H6.600zM0 7.300h6v5.500L0 12zM6.600 7.300H14V14l-7.400-1.100z" />
        </svg>
      </TaskbarButton>
      <TaskbarButton label="Suche">
        <Icon size={15}>
          <circle cx="9" cy="5.500" r="4.500" />
          <path d="M5.500 9L1 14" />
        </Icon>
      </TaskbarButton>
      <TaskbarButton label="Snipping Tool" running>
        <svg width="20" height="20" viewBox="0 0 20 20" fill="none">
          <ellipse cx="9" cy="6.500" rx="8" ry="5" transform="rotate(-18 9 6.500)" fill="#f6ecec" stroke="#c65a5f" strokeWidth="1.200" />
          <path d="M4 8l10-4M9 5l4 8" stroke="#b9a6a8" />
          <path d="M10 11l3 3M15 10l-2 4" stroke="#ddd" strokeWidth="1.300" />
          <ellipse cx="12" cy="16.500" rx="1.500" ry="2.500" stroke="#2e9be0" strokeWidth="1.300" />
          <ellipse cx="16.500" cy="14.500" rx="2" ry="1.500" stroke="#2e9be0" strokeWidth="1.300" />
        </svg>
      </TaskbarButton>
      <TaskbarButton label="OBS Studio" running>
        <svg width="20" height="20" viewBox="0 0 20 20" fill="none">
          <circle cx="10" cy="10" r="8.800" fill="#2b2b2f" stroke="#e5e5e5" strokeWidth="1.200" />
          <path d="M9 3.500c-2 3-.5 5.500 2 6.500M16 11.500c-1.500-3-4.500-3-6 0M6 15c3.500.3 5-2 4-5" stroke="#d9d9d9" strokeWidth="1.600" />
          <circle cx="10" cy="10.300" r="1.500" fill="#d9d9d9" />
        </svg>
      </TaskbarButton>
      <TaskbarButton label="Excel" running active>
        <svg width="20" height="20" viewBox="0 0 20 20">
          <path d="M6 1h13v18H6z" fill="#21a366" />
          <path d="M12 1h7v6h-7z" fill="#33c481" />
          <path d="M6 7h6v6H6z" fill="#107c41" />
          <path d="M6 13h13v6H6z" fill="#185c37" />
          <path d="M1 5h10v10H1z" fill="#107c41" />
          <text x="3" y="13" fontSize="9" fontWeight="700" fill="white">X</text>
        </svg>
      </TaskbarButton>
      <TaskbarButton label="Word" running>
        <svg width="20" height="20" viewBox="0 0 20 20">
          <path d="M5 1h14v5H5z" fill="#41a5ee" />
          <path d="M5 6h14v4.500H5z" fill="#2b7cd3" />
          <path d="M5 10.500h14v4H5z" fill="#185abd" />
          <path d="M5 14.500h14V19H5z" fill="#103f91" />
          <path d="M1 5h10v10H1z" fill="#185abd" />
          <text x="1.500" y="13" fontSize="9" fontWeight="700" fill="white">W</text>
        </svg>
      </TaskbarButton>
      <TaskbarButton label="Firefox" running>
        <svg width="20" height="20" viewBox="0 0 20 20">
          <path d="M10 19c-5 0-9-3.500-9-8.500C1 7 2.500 5 4 3l1 2.500C6 4 7.500 4 9 4c1-2 2-3 4-4 0 2 .5 3 2 4 2.500 2 4 4.500 4 7.500C19 16 15 19 10 19z" fill="#ff9a1f" />
          <path d="M1.500 8c1 6 5 8 9 7.500 4-.5 6-4 5-8 3 5 2 11-5.500 11.500C5 19 0 15 1.500 8z" fill="#ff3b4e" />
          <circle cx="10" cy="10.500" r="4" fill="#7542e5" />
          <path d="M13 0c0 4 5 5 4.500 10-.5-2-2-3.500-4-4-1.500-2-1.500-4-.5-6z" fill="#ffe03a" />
          <path d="M4 6c2-1 4-.5 5 1.500L6 9z" fill="#ff9a1f" />
        </svg>
      </TaskbarButton>
      <button aria-label="Ausgeblendete Symbole" className="mr-[3px] ml-auto flex h-full items-center border-r border-[#5b6578] pr-1">
        <Icon size={12}>
          <path d="M1 8.500l5-5 5 5" />
        </Icon>
      </button>
    </footer>
  );
}

export default function App() {
  return (
    <div className="flex h-screen w-full flex-col overflow-hidden font-['Open_Sans','Noto_Sans',sans-serif]">
      <TitleBar />
      <RibbonTabs />
      <Ribbon />
      <FormulaBar />
      <Sheet />
      <SheetTabs />
      <StatusBar />
      <Taskbar />
    </div>
  );
}
